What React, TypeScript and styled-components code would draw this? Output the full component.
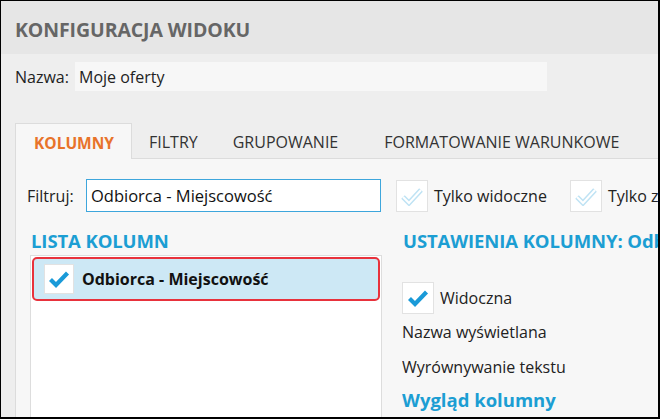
import React from "react";
import styled, { createGlobalStyle } from "styled-components";

const Global = createGlobalStyle`
  html, body { margin: 0; padding: 0; background: #f7f7f7; }
  body { font-family: "Open Sans", "Noto Sans", sans-serif; }
  * { box-sizing: border-box; }
`;

const Frame = styled.div`
  width: 660px;
  height: 419px;
  border: 1px solid #000;
  border-right-width: 2px;
  border-bottom-width: 2px;
  overflow: hidden;
  display: flex;
  flex-direction: column;
  background: #eeeeee;
`;

const Header = styled.div`
  height: 53px;
  flex: none;
  background: #e6e6e6;
  display: flex;
  align-items: center;
  padding-left: 14px;
  padding-top: 4px;
  font-weight: 700;
  font-size: 19.5px;
  color: #666666;
  letter-spacing: -0.1px;
`;

const Body = styled.div`
  flex: 1;
  display: flex;
  flex-direction: column;
  padding: 8px 0 0 14px;
  min-height: 0;
`;

const NameRow = styled.div`
  display: flex;
  align-items: center;
  font-size: 16px;
  color: #222;
`;

const NameLabel = styled.span`
  width: 60px;
  flex: none;
`;

const NameInput = styled.div`
  width: 472px;
  height: 29px;
  flex: none;
  background: #f7f7f7;
  display: flex;
  align-items: center;
  padding-left: 4px;
  font-size: 16px;
  color: #222;
`;

const Tabs = styled.div`
  margin-top: 32px;
  height: 36px;
  flex: none;
  display: flex;
  align-items: stretch;
  border-bottom: 1px solid #dcdcdc;
`;

const ActiveTab = styled.div`
  display: flex;
  align-items: center;
  padding: 2px 17px 0 18px;
  font-size: 15.5px;
  font-weight: 700;
  color: #e8732a;
  background: #f7f7f7;
  border: 1px solid #dcdcdc;
  border-bottom: none;
  margin-bottom: -1px;
`;

const Tab = styled.div<{ $offset: number }>`
  display: flex;
  align-items: center;
  padding-top: 2px;
  margin-left: ${(p) => p.$offset}px;
  font-size: 16px;
  color: #333;
  white-space: nowrap;
`;

const Panel = styled.div`
  flex: 1;
  background: #f7f7f7;
  border-left: 1px solid #dcdcdc;
  padding: 20px 0 0 11px;
  display: flex;
  flex-direction: column;
  min-height: 0;
`;

const FilterRow = styled.div`
  display: flex;
  align-items: center;
  height: 33px;
  flex: none;
  font-size: 16px;
  color: #222;
  & > * { flex: none; }
`;

const FilterLabel = styled.span`
  width: 59px;
`;

const FilterInput = styled.div`
  width: 295px;
  height: 33px;
  background: #fff;
  border: 1px solid #3ea6dc;
  display: flex;
  align-items: center;
  padding-left: 4px;
  font-size: 16.5px;
  color: #111;
  margin-right: 15px;
`;

const Box = styled.div<{ $size?: number }>`
  width: ${(p) => p.$size ?? 32}px;
  height: ${(p) => p.$size ?? 32}px;
  flex: none;
  background: #fff;
  border: 1px solid #e2e2e2;
  display: flex;
  align-items: center;
  justify-content: center;
`;

const CheckLabel = styled.span<{ $gap?: number }>`
  margin-left: 6px;
  margin-right: ${(p) => p.$gap ?? 0}px;
  white-space: nowrap;
`;

const Columns = styled.div`
  display: flex;
  margin-top: 18px;
  flex: 1;
  min-height: 0;
`;

const LeftCol = styled.div`
  width: 375px;
  flex: none;
  padding-left: 3px;
  display: flex;
  flex-direction: column;
`;

const RightCol = styled.div`
  flex: 1;
  display: flex;
  flex-direction: column;
  white-space: nowrap;
  overflow: hidden;
`;

const SectionTitle = styled.div`
  font-size: 18.5px;
  font-weight: 700;
  color: #1c9ed3;
  height: 22px;
  line-height: 22px;
  padding-left: 1px;
  letter-spacing: -0.1px;
`;

const List = styled.div`
  margin-top: 3px;
  width: 352px;
  flex: 1;
  background: #fff;
  border: 1px solid #dddddd;
  border-bottom: none;
  padding: 1px;
`;

const SelectedRow = styled.div`
  height: 44px;
  background: #cde8f5;
  border: 2px solid #e8323c;
  border-radius: 5px;
  display: flex;
  align-items: center;
  padding-left: 10px;
  gap: 8px;
  font-size: 16px;
  font-weight: 700;
  color: #111;
`;

const SettingRow = styled.div<{ $h: number }>`
  height: ${(p) => p.$h}px;
  flex: none;
  display: flex;
  align-items: center;
  font-size: 16px;
  color: #222;
`;

const SubTitle = styled.div`
  font-size: 18.5px;
  font-weight: 700;
  color: #1c9ed3;
  height: 30px;
  display: flex;
  align-items: center;
`;

const Check = ({ faded }: { faded?: boolean }) =>
  faded ? (
    <svg width="24" height="20" viewBox="0 0 24 20">
      <polyline points="3,11 9,17 21,4" fill="none" stroke="#bfe3f4" strokeWidth="5" strokeLinejoin="miter" />
      <polyline points="3,11 9,17 21,4" fill="none" stroke="#ffffff" strokeWidth="2" strokeLinejoin="miter" />
    </svg>
  ) : (
    <svg width="22" height="18" viewBox="0 0 22 18">
      <polyline points="2.5,9.5 8,15 19.5,3" fill="none" stroke="#1a9ad8" strokeWidth="4.2" strokeLinejoin="miter" />
    </svg>
  );

export default function App() {
  return (
    <>
      <Global />
      <Frame>
        <Header>KONFIGURACJA WIDOKU</Header>
        <Body>
          <NameRow>
            <NameLabel>Nazwa:</NameLabel>
            <NameInput>Moje oferty</NameInput>
          </NameRow>
          <Tabs>
            <ActiveTab>KOLUMNY</ActiveTab>
            <Tab $offset={17}>FILTRY</Tab>
            <Tab $offset={35}>GRUPOWANIE</Tab>
            <Tab $offset={46}>FORMATOWANIE WARUNKOWE</Tab>
          </Tabs>
          <Panel>
            <FilterRow>
              <FilterLabel>Filtruj:</FilterLabel>
              <FilterInput>Odbiorca - Miejscowość</FilterInput>
              <Box>
                <Check faded />
              </Box>
              <CheckLabel $gap={23}>Tylko widoczne</CheckLabel>
              <Box>
                <Check faded />
              </Box>
              <CheckLabel>Tylko zmienione</CheckLabel>
            </FilterRow>
            <Columns>
              <LeftCol>
                <SectionTitle>LISTA KOLUMN</SectionTitle>
                <List>
                  <SelectedRow>
                    <Box $size={30}>
                      <Check />
                    </Box>
                    <span>Odbiorca - Miejscowość</span>
                  </SelectedRow>
                </List>
              </LeftCol>
              <RightCol>
                <SectionTitle>USTAWIENIA KOLUMNY: Odbiorca - Miejscowość</SectionTitle>
                <SettingRow $h={30} />
                <SettingRow $h={32}>
                  <Box>
                    <Check />
                  </Box>
                  <CheckLabel>Widoczna</CheckLabel>
                </SettingRow>
                <SettingRow $h={35}>Nazwa wyświetlana</SettingRow>
                <SettingRow $h={35}>Wyrównywanie tekstu</SettingRow>
                <SubTitle>Wygląd kolumny</SubTitle>
              </RightCol>
            </Columns>
          </Panel>
        </Body>
      </Frame>
    </>
  );
}
